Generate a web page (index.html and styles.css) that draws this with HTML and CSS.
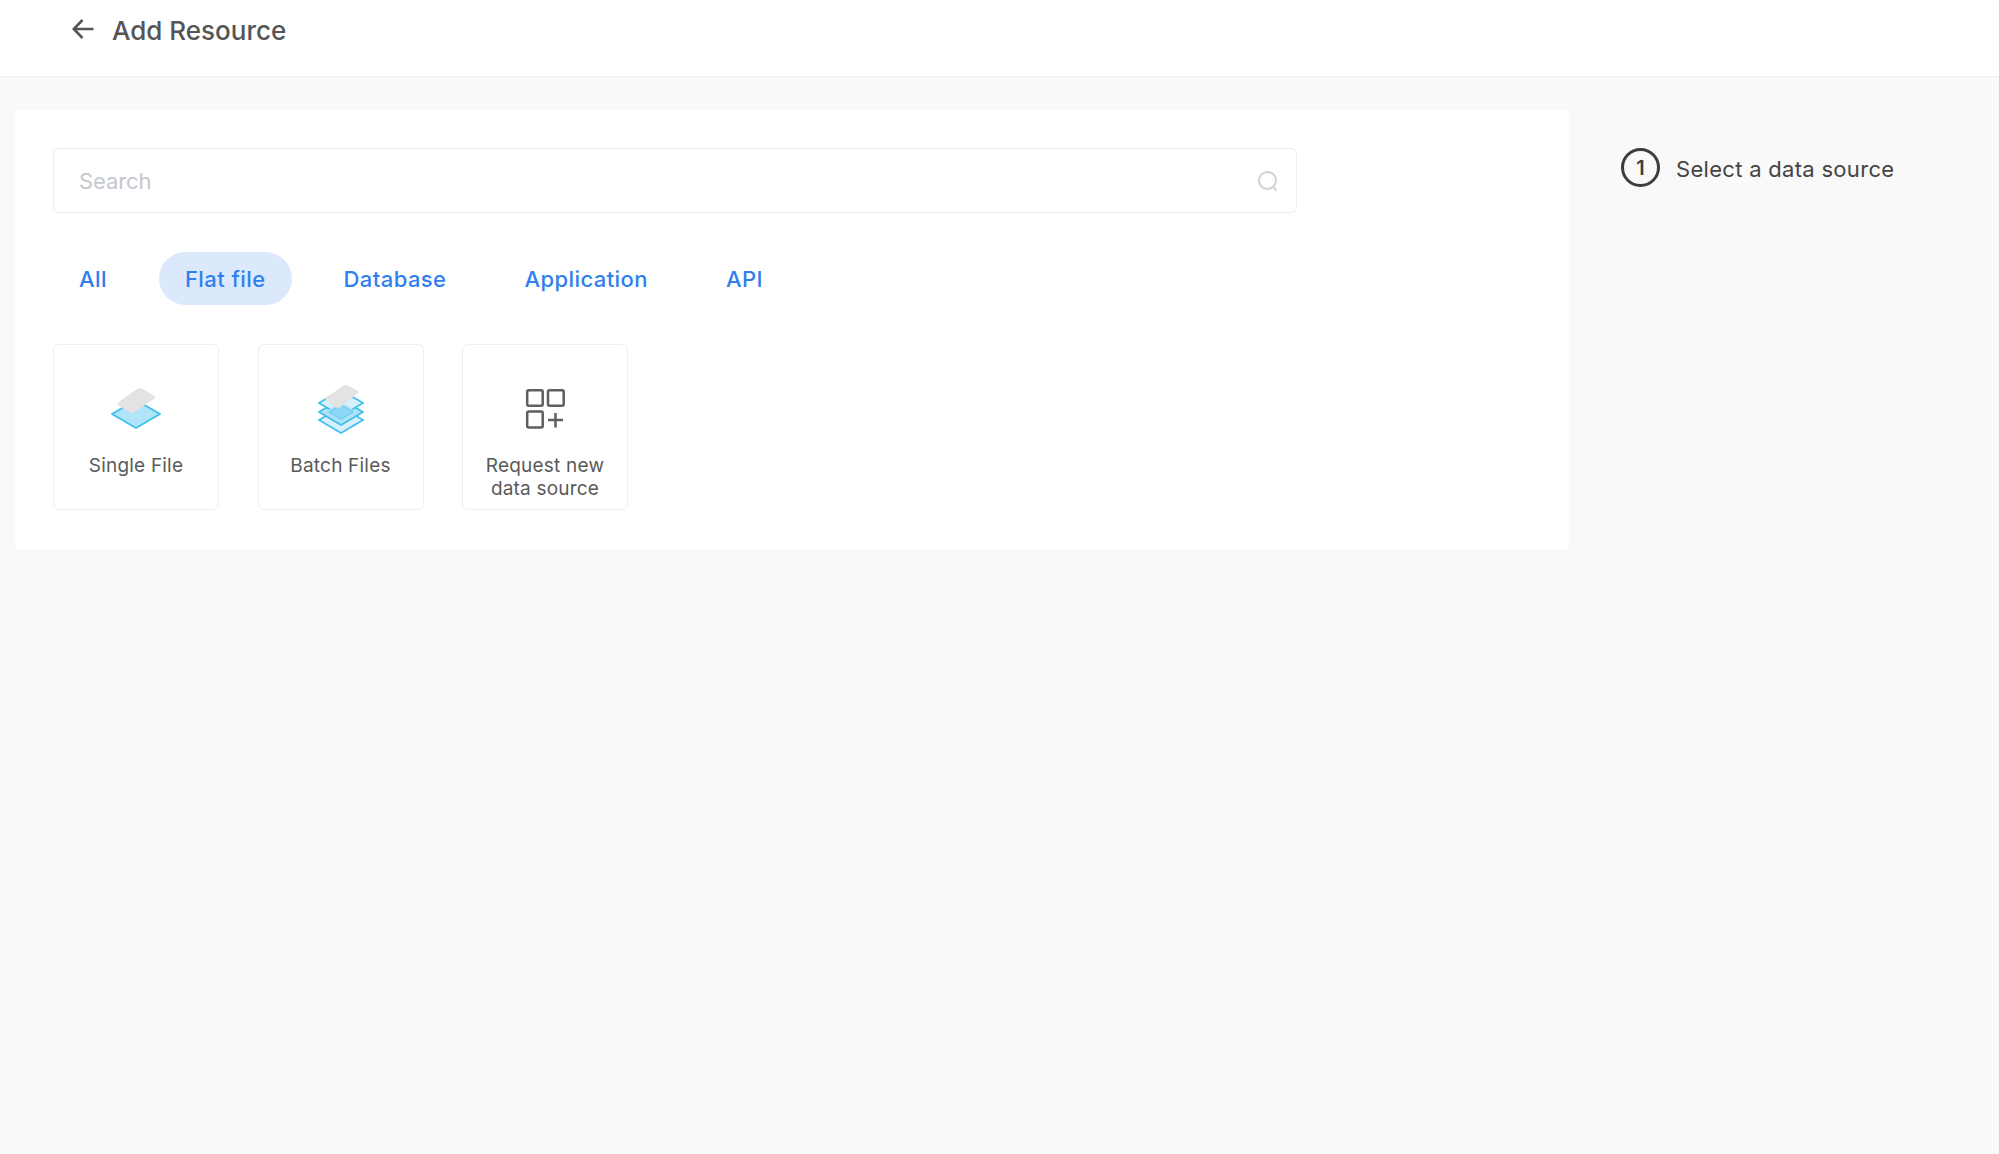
FILE: index.html
```html
<!DOCTYPE html>
<html lang="en">
<head>
<meta charset="utf-8">
<title>Add Resource</title>
<link rel="stylesheet" href="styles.css">
</head>
<body>
<header class="topbar">
  <svg class="back" viewBox="0 0 22 22" width="22" height="22"><path d="M21.500 11H2M10.500 2 1.800 11l8.700 9"/></svg>
  <h1 class="title">Add Resource</h1>
</header>
<main class="layout">
  <section class="panel">
    <div class="search">
      <span class="placeholder">Search</span>
      <svg class="search-icon" viewBox="0 0 22 22" width="22" height="22"><circle cx="10.500" cy="10.500" r="8.500"/><path d="M17 17.500 19.500 21"/></svg>
    </div>
    <nav class="tabs">
      <span class="tab">All</span>
      <span class="tab active">Flat file</span>
      <span class="tab">Database</span>
      <span class="tab">Application</span>
      <span class="tab">API</span>
    </nav>
    <div class="cards">
      <article class="card">
        <svg class="card-icon" viewBox="0 0 52 50" width="52" height="50">
          <path class="base" d="M26 44 2 30l24-14 24 14z"/>
          <path class="sheet" d="M28 4.500q2-1 4 0l12.500 7.500q1.500 1 0 2.500L24 28.500q-2 1-4 0L8 21q-1.500-1 0-2.500z"/>
        </svg>
        <span class="card-label">Single File</span>
      </article>
      <article class="card">
        <svg class="card-icon" viewBox="0 0 52 50" width="52" height="50">
          <path class="base light" d="M26 49 4 36l22-13 22 13z"/>
          <path class="base" d="M26 41 4 28l22-13 22 13z"/>
          <path class="base light" d="M26 32 4 19 26 6l22 13z"/>
          <path class="mid" d="M26 38 10 28l16-10 16 10z"/>
          <path class="inner" d="M26 35 14 28l12-7 12 7z"/>
          <path class="sheet" d="M29 1.500q2-1 4 0l10 5.500q1.500 1 0 2L25 23.500q-2 1-4 0L11 16q-1.500-1 0-2.500z"/>
        </svg>
        <span class="card-label">Batch Files</span>
      </article>
      <article class="card">
        <svg class="card-icon grid" viewBox="0 0 44 50" width="44" height="50">
          <rect x="4.200" y="6.200" width="15.500" height="15.500" rx="1.500"/>
          <rect x="25" y="6.200" width="15.700" height="15.500" rx="1.500"/>
          <rect x="4.200" y="27.500" width="15.500" height="16" rx="1.500"/>
          <path d="M25 36h15M32.500 29v14.500"/>
        </svg>
        <span class="card-label">Request new<br>data source</span>
      </article>
    </div>
  </section>
  <aside class="steps">
    <span class="step-num">1</span>
    <span class="step-text">Select a data source</span>
  </aside>
</main>
</body>
</html>
```
FILE: styles.css
```css
* { box-sizing: border-box; }
html, body { height: 100%; }
body {
  margin: 0;
  background: #f9f9f9;
  font-family: Inter, "Liberation Sans", sans-serif;
  color: #555;
}
.topbar {
  height: 77px;
  background: #fff;
  border-bottom: 1px solid #f0f0f0;
  display: flex;
  align-items: flex-start;
  padding: 18px 0 0 72px;
  gap: 18px;
}
.back { fill: none; stroke: #555; stroke-width: 2.600; }
.title { margin: -3px 0 0; font-size: 26px; line-height: 32px; font-weight: 500; color: #555; }
.layout {
  display: flex;
  align-items: flex-start;
  padding: 33px 0 0 15px;
}
.panel {
  width: 1554px;
  height: 439px;
  background: #fff;
  padding: 38px;
}
.search {
  width: 1244px;
  height: 65px;
  border: 1.500px solid #ebebf0;
  border-radius: 6px;
  display: flex;
  align-items: center;
  justify-content: space-between;
  padding: 0 17px 0 25px;
}
.placeholder { font-size: 22px; letter-spacing: -.1px; color: #c5c7d0; }
.search-icon { fill: none; stroke: #cfd0d8; stroke-width: 1.900; }
.tabs {
  display: flex;
  gap: 26px;
  margin-top: 39px;
}
.tab {
  height: 53px;
  padding: 0 26px;
  border-radius: 27px;
  display: flex;
  align-items: center;
  font-size: 22px;
  letter-spacing: .42px;
  font-weight: 500;
  color: #2f7fef;
}
.tab.active { background: #dce9fd; }
.cards {
  display: flex;
  gap: 38.500px;
  margin-top: 39px;
}
.card {
  width: 166px;
  height: 166px;
  border: 1.500px solid #eeeeee;
  border-radius: 6px;
  display: flex;
  flex-direction: column;
  align-items: center;
}
.card-icon { margin-top: 39px; flex: none; }
.card-icon.grid { fill: none; stroke: #5f5f5f; stroke-width: 2.500; }
.base { fill: #b0e4f9; stroke: #45c0ea; stroke-width: 2; stroke-linejoin: round; }
.base.light { fill: #d6f1fc; }
.mid { fill: #a5e0f9; }
.inner { fill: #8ed8f7; stroke: #5cc8ee; stroke-width: 1; }
.sheet { fill: #e3e3e3; }
.card-label {
  margin-top: 20px;
  font-size: 19px;
  letter-spacing: .2px;
  line-height: 23px;
  text-align: center;
  color: #5a5a5a;
}
.steps {
  margin: 38px 0 0 52px;
  display: flex;
  align-items: center;
  gap: 16px;
}
.step-num {
  width: 39px;
  height: 39px;
  border: 3px solid #3d3d3d;
  border-radius: 50%;
  display: flex;
  align-items: center;
  justify-content: center;
  font-size: 20px;
  font-weight: 600;
  color: #3d3d3d;
}
.step-text { font-size: 22px; letter-spacing: .3px; color: #444; margin-top: 2px; }
```
